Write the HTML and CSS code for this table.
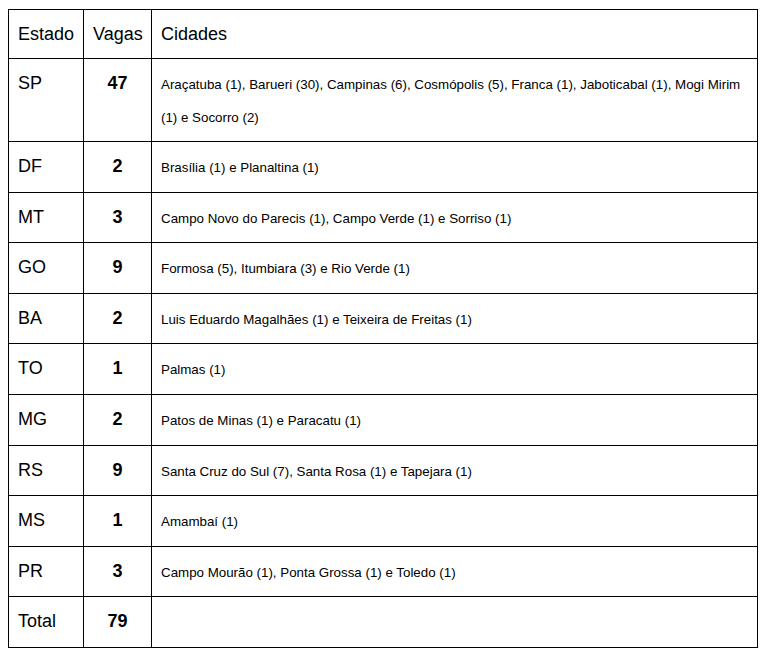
FILE: index.html
```html
<!DOCTYPE html>
<html lang="pt">
<head>
<meta charset="utf-8">
<link rel="stylesheet" href="styles.css">
</head>
<body>
<table class="vagas">
  <colgroup>
    <col class="c-estado">
    <col class="c-vagas">
    <col>
  </colgroup>
  <thead>
    <tr><th>Estado</th><th>Vagas</th><th>Cidades</th></tr>
  </thead>
  <tbody>
    <tr><td>SP</td><td class="num">47</td><td class="cid">Araçatuba (1), Barueri (30), Campinas (6), Cosmópolis (5), Franca (1), Jaboticabal (1), Mogi Mirim (1) e Socorro (2)</td></tr>
    <tr><td>DF</td><td class="num">2</td><td class="cid">Brasília (1) e Planaltina (1)</td></tr>
    <tr><td>MT</td><td class="num">3</td><td class="cid">Campo Novo do Parecis (1), Campo Verde (1) e Sorriso (1)</td></tr>
    <tr><td>GO</td><td class="num">9</td><td class="cid">Formosa (5), Itumbiara (3) e Rio Verde (1)</td></tr>
    <tr><td>BA</td><td class="num">2</td><td class="cid">Luis Eduardo Magalhães (1) e Teixeira de Freitas (1)</td></tr>
    <tr><td>TO</td><td class="num">1</td><td class="cid">Palmas (1)</td></tr>
    <tr><td>MG</td><td class="num">2</td><td class="cid">Patos de Minas (1) e Paracatu (1)</td></tr>
    <tr><td>RS</td><td class="num">9</td><td class="cid">Santa Cruz do Sul (7), Santa Rosa (1) e Tapejara (1)</td></tr>
    <tr><td>MS</td><td class="num">1</td><td class="cid">Amambaí (1)</td></tr>
    <tr><td>PR</td><td class="num">3</td><td class="cid">Campo Mourão (1), Ponta Grossa (1) e Toledo (1)</td></tr>
    <tr><td>Total</td><td class="num">79</td><td class="cid"></td></tr>
  </tbody>
</table>
</body>
</html>
```
FILE: styles.css
```css
html, body {
  background: #ffffff;
}
body {
  margin: 9px 8px 8px 8px;
  font-family: "Liberation Sans", Arial, sans-serif;
  color: #000000;
}
.vagas {
  width: 750px;
  border-collapse: collapse;
  table-layout: fixed;
}
.c-estado { width: 75px; }
.c-vagas { width: 68px; }
.vagas th,
.vagas td {
  border: 1px solid #000000;
  padding: 8px 9px;
  vertical-align: top;
  text-align: left;
  font-size: 18px;
  font-weight: normal;
  line-height: 33.6px;
}
.vagas th {
  line-height: 32px;
}
.vagas td.num {
  text-align: center;
  font-weight: bold;
}
.vagas td.cid {
  font-family: "Liberation Sans", Arial, sans-serif;
  font-size: 13.33px;
  line-height: 33px;
  padding-top: 9px;
  padding-bottom: 7px;
}
```
